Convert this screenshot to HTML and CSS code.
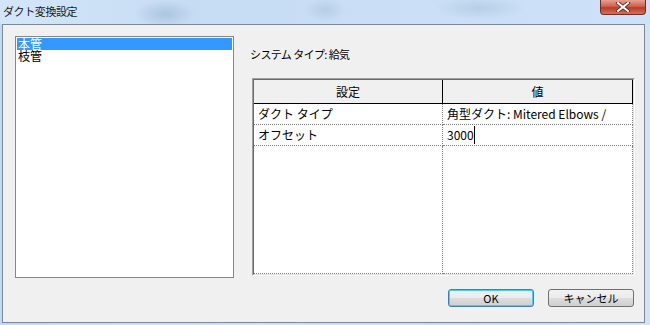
FILE: index.html
```html
<!DOCTYPE html>
<html lang="ja">
<head>
  <meta charset="UTF-8" />
  <title>ダクト変換設定</title>
  <link rel="stylesheet" href="styles.css">
</head>
<body>

  <div class="window">
    <!-- TITLE BAR -->
    <div class="titlebar">
      <span class="title">ダクト変換設定</span>
      <span class="close-btn">
        <svg width="16" height="10" viewBox="0 0 16 10">
          <path d="M3 1 L13 9 M13 1 L3 9" stroke="#5a2a22" stroke-width="3.6" stroke-linecap="square"/>
          <path d="M3 1 L13 9 M13 1 L3 9" stroke="#ffffff" stroke-width="2" stroke-linecap="square"/>
        </svg>
      </span>
    </div>

    <!-- CLIENT -->
    <div class="client">
      <ul class="listbox">
        <li class="selected">本管</li>
        <li>枝管</li>
      </ul>

      <div class="panel">
        <div class="system-label">システム タイプ: 給気</div>

        <div class="grid-frame">
          <div class="grid-inner">
            <table class="grid">
              <thead>
                <tr>
                  <th>設定</th>
                  <th>値</th>
                </tr>
              </thead>
              <tbody>
                <tr>
                  <td>ダクト タイプ</td>
                  <td>角型ダクト: Mitered Elbows /</td>
                </tr>
                <tr>
                  <td>オフセット</td>
                  <td><span class="caret">3000</span></td>
                </tr>
                <tr class="filler">
                  <td></td>
                  <td></td>
                </tr>
              </tbody>
            </table>
          </div>
        </div>

        <div class="buttons">
          <button class="btn default">OK</button>
          <button class="btn">キャンセル</button>
        </div>
      </div>
    </div>
  </div>

</body>
</html>
```

FILE: styles.css
```css
html, body {
  margin: 0;
  padding: 0;
}
body {
  width: 650px;
  height: 325px;
  overflow: hidden;
  font-family: "Noto Sans CJK JP", "Noto Sans", sans-serif;
  font-size: 12px;
  color: #000;
  background: linear-gradient(90deg, #c2d9f2, #cde2f7 40%, #c6dcf4 70%, #cfe4f9);
}
.window {
  width: 650px;
  height: 325px;
}
.titlebar {
  height: 24px;
  display: flex;
  align-items: flex-start;
  justify-content: space-between;
  background:
    radial-gradient(ellipse 30px 14px at 165px 14px, rgba(120,150,185,0.35), transparent),
    radial-gradient(ellipse 20px 12px at 325px 10px, rgba(140,165,195,0.3), transparent),
    radial-gradient(ellipse 45px 12px at 480px 8px, rgba(140,165,195,0.3), transparent),
    linear-gradient(90deg, #d3e6f9, #c6dcf3 30%, #cadff5 60%, #cde2f8);
}
.title {
  padding: 3px 0 0 3px;
  font-size: 11px;
  line-height: 16px;
  letter-spacing: -0.4px;
  color: #1a1a1a;
}
.close-btn {
  width: 44px;
  height: 14px;
  margin-right: 4px;
  display: flex;
  align-items: center;
  justify-content: center;
  border: 1px solid #6b2d24;
  border-top: none;
  border-radius: 0 0 4px 4px;
  background: linear-gradient(#e8a090, #d0624e 45%, #b83c28 55%, #d5705a);
}
.client {
  margin: 0 5px 0 2px;
  height: 297px;
  border: 1px solid #7b8896;
  background: #f0f0f0;
  display: flex;
  align-items: flex-start;
}
.listbox {
  list-style: none;
  margin: 11px 0 0 12px;
  padding: 1px;
  width: 215px;
  height: 238px;
  border: 1px solid #828790;
  background: #fff;
}
.listbox li {
  height: 12px;
  line-height: 12px;
  padding-left: 1px;
}
.listbox li.selected {
  background: #3399ff;
  color: #fff;
}
.panel {
  margin-left: 16px;
  width: 385px;
}
.system-label {
  margin-top: 22px;
  height: 14px;
  line-height: 14px;
  font-size: 11px;
  letter-spacing: -0.6px;
}
.grid-frame {
  margin: 17px 0 0 2px;
  width: 381px;
  border: 1px solid;
  border-color: #a0a0a0 #ffffff #ffffff #a0a0a0;
}
.grid-inner {
  border: 1px solid;
  border-color: #696969 #e3e3e3 #e3e3e3 #696969;
  background: #fff;
}
.grid {
  width: 379px;
  border-collapse: collapse;
  table-layout: fixed;
}
.grid th {
  height: 23px;
  padding: 0;
  font-weight: normal;
  background: #f0f0f0;
  border-bottom: 1px solid #000;
  border-right: 1px solid #000;
  line-height: 14px;
}
.grid th:first-child {
  width: 188px;
}
.grid td {
  height: 20px;
  padding: 0 0 0 4px;
  line-height: 14px;
  border-bottom: 1px dotted #808080;
  border-right: 1px dotted #808080;
  white-space: nowrap;
  overflow: hidden;
}
.grid tr.filler td {
  height: 127px;
}
.caret {
  border-right: 1px solid #000;
  padding-right: 0;
  display: inline-block;
  line-height: 18px;
}
.buttons {
  margin-top: 13px;
  display: flex;
  justify-content: flex-end;
  gap: 14px;
  padding-right: 1px;
}
.btn {
  width: 86px;
  height: 18px;
  padding: 0;
  font-family: "Noto Sans CJK JP", "Noto Sans", sans-serif;
  font-size: 11px;
  line-height: 14px;
  color: #000;
  border: 1px solid #707070;
  border-radius: 3px;
  background: linear-gradient(#f2f2f2, #ebebeb 50%, #dddddd 51%, #cfcfcf);
}
.btn.default {
  border-color: #3c7fb1;
  box-shadow: inset 0 0 0 1px #48d0f5;
}
```
